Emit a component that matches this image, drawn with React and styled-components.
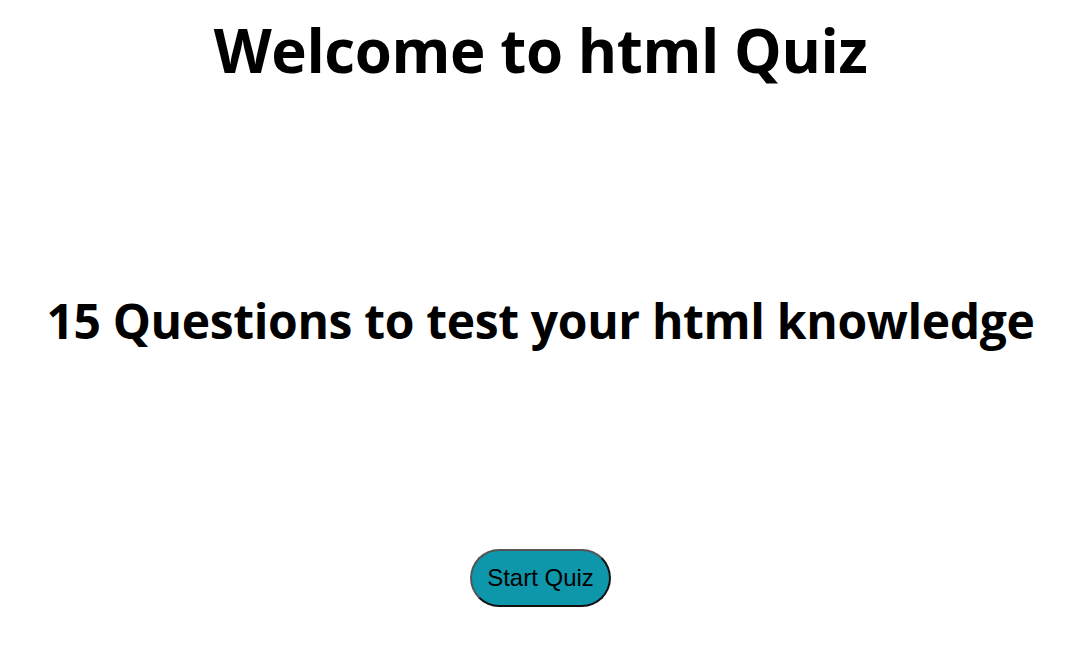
import React from 'react'
import styled, { createGlobalStyle } from 'styled-components'

const GlobalStyle = createGlobalStyle`
  body {
    margin: 0;
    background: #fff;
    font-family: "Open Sans", "Noto Sans", sans-serif;
  }
`

const Page = styled.main`
  display: flex;
  flex-direction: column;
  align-items: center;
  height: 651px;
  padding-top: 18px;
  box-sizing: border-box;
`

const Title = styled.h1`
  margin: 0;
  font-size: 60px;
  font-weight: 700;
  line-height: 64px;
  letter-spacing: -0.4px;
  color: #000;
`

const Subtitle = styled.h2`
  margin: 210px 0 0;
  font-size: 48px;
  font-weight: 700;
  line-height: 58px;
  letter-spacing: -0.35px;
  color: #000;
`

const StartButton = styled.button`
  margin-top: 199px;
  padding: 13px 15px;
  font-family: "Liberation Sans", Arial, sans-serif;
  font-size: 24px;
  line-height: 28px;
  color: #000;
  background: #0e96ab;
  border: 2px solid;
  border-color: #555 #111 #111 #555;
  border-radius: 30px;
  cursor: pointer;
`

export default function App() {
  return (
    <>
      <GlobalStyle />
      <Page>
        <Title>Welcome to html Quiz</Title>
        <Subtitle>15 Questions to test your html knowledge</Subtitle>
        <StartButton>Start Quiz</StartButton>
      </Page>
    </>
  )
}
